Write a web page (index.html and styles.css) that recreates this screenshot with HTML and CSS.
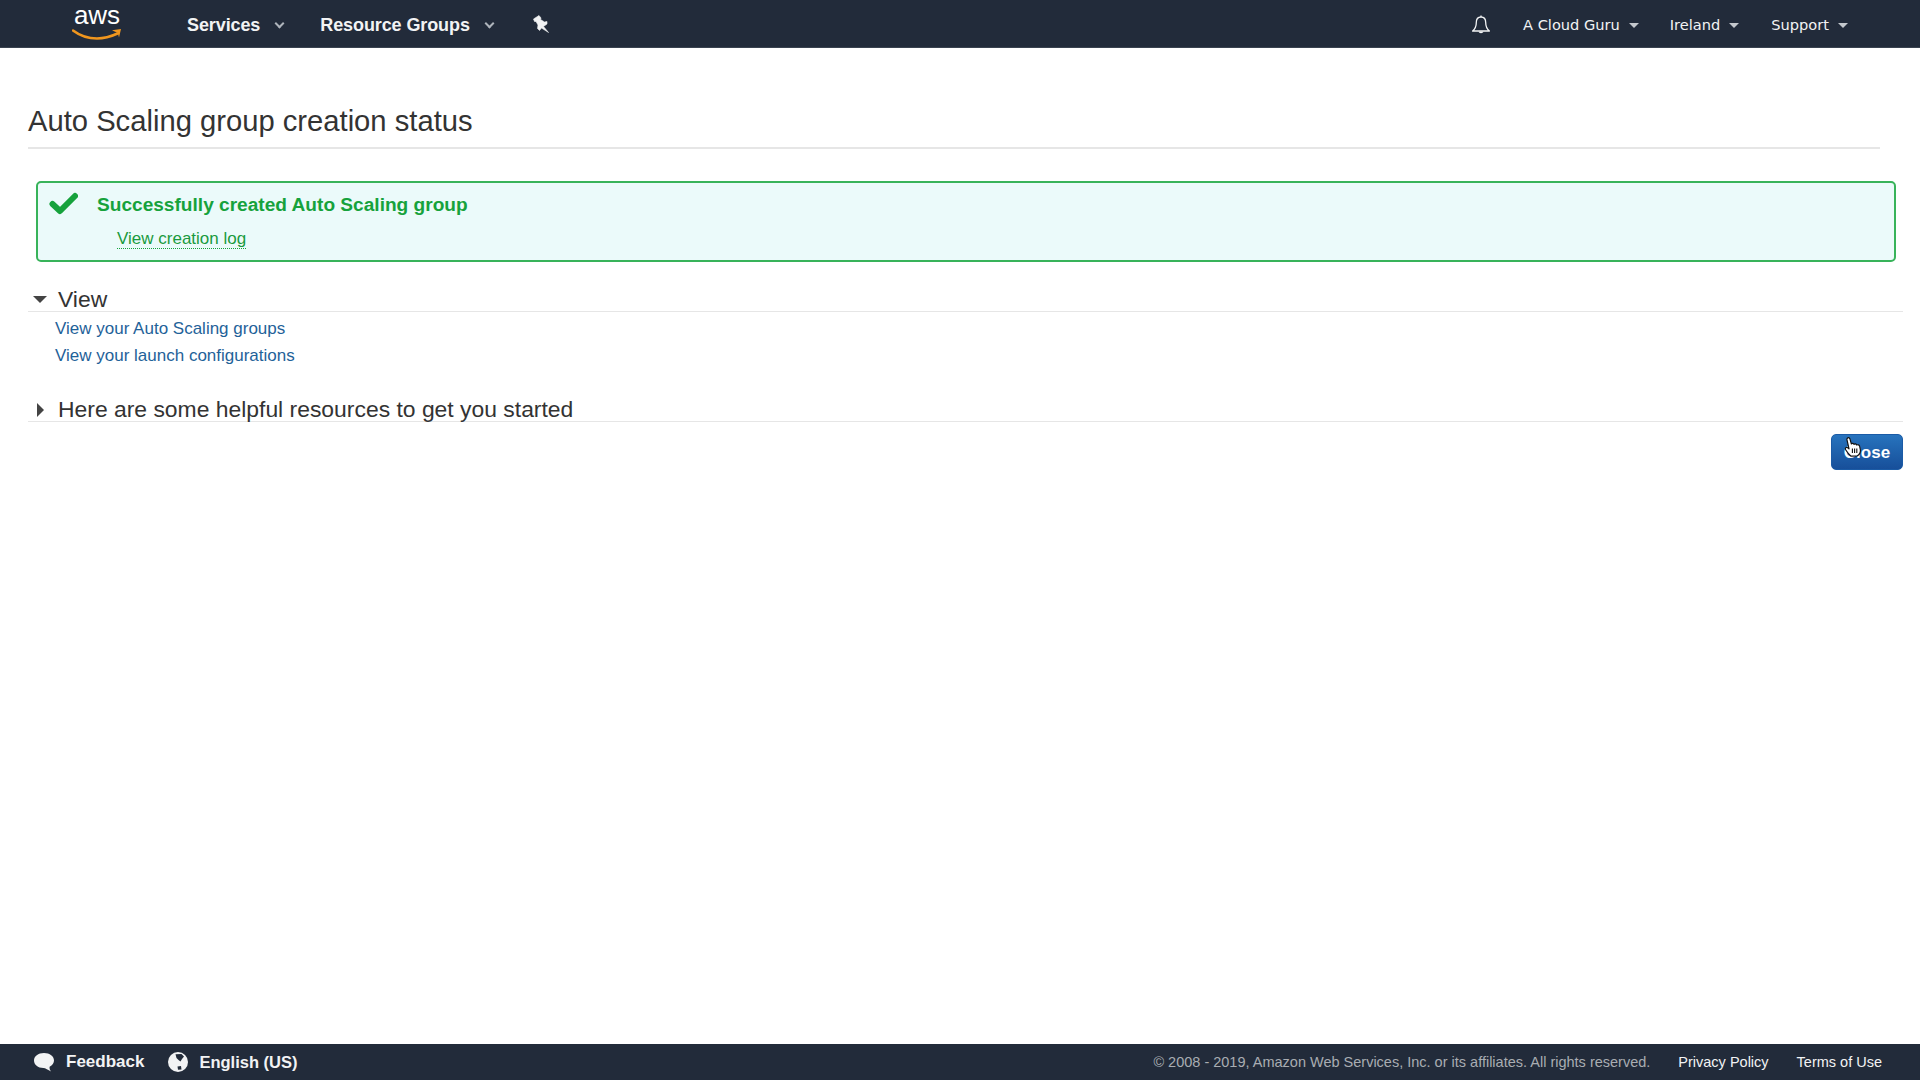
FILE: index.html
```html
<!DOCTYPE html>
<html lang="en">
<head>
    <meta charset="UTF-8">
    <title>Auto Scaling group creation status</title>
    <link rel="stylesheet" href="styles.css">
</head>
<body>

    <nav class="top-nav">
        <a class="logo">
            <span class="logo-text">aws</span>
            <svg class="logo-smile" width="50" height="14" viewBox="0 0 50 14">
                <path d="M1 2.5C9 8.5 17 10.5 25 10.5C32 10.5 39 8.5 45.5 5.5" fill="none" stroke="#f0961e" stroke-width="2.6" stroke-linecap="round"/>
                <path d="M40 2.2L49 1L47 9.5L45.8 5L40 2.2Z" fill="#f0961e"/>
            </svg>
        </a>
        <a class="nav-main services">Services <span class="chevron"></span></a>
        <a class="nav-main groups">Resource Groups <span class="chevron"></span></a>
        <svg class="pin" width="16" height="18" viewBox="0 0 16 18">
            <path d="M0.5 4L6 0.5L8 3L7.6 4.5L11.5 7L14 6.5L14 9L10.5 11.5L15.5 17.5L8.5 13L6.5 15.5L4.5 13.5L5 10L3 6.5L1.5 6.5Z" fill="#f2f3f4" stroke="#f2f3f4" stroke-width="0.6" stroke-linejoin="round"/>
        </svg>

        <div class="nav-right">
            <svg class="bell" width="20" height="20" viewBox="0 0 20 20">
                <path d="M10 2C6.6 2 5.3 4.6 5.3 7.5C5.3 11.5 4.6 13.6 1.6 16H18.4C15.4 13.6 14.7 11.5 14.7 7.5C14.7 4.6 13.4 2 10 2Z" fill="none" stroke="#f2f3f4" stroke-width="1.3" stroke-linejoin="round"/>
                <path d="M10 0.4V2" stroke="#f2f3f4" stroke-width="1.3"/>
                <path d="M7.6 16.6C7.8 18.8 12.2 18.8 12.4 16.6Z" fill="#f2f3f4"/>
            </svg>
            <a class="nav-item account">A Cloud Guru <span class="caret"></span></a>
            <a class="nav-item region">Ireland <span class="caret"></span></a>
            <a class="nav-item support">Support <span class="caret"></span></a>
        </div>
    </nav>

    <main class="content">
        <h1 class="page-title">Auto Scaling group creation status</h1>

        <div class="alert">
            <svg class="alert-check" width="30" height="24" viewBox="0 0 30 24">
                <path d="M4.5 12L12 19L27 4" fill="none" stroke="#16a23c" stroke-width="6" stroke-linecap="round" stroke-linejoin="round"/>
            </svg>
            <div class="alert-body">
                <p class="alert-title">Successfully created Auto Scaling group</p>
                <a class="alert-link">View creation log</a>
            </div>
        </div>

        <section class="panel panel-view">
            <h2 class="panel-head"><span class="arrow-down"></span>View</h2>
            <ul class="panel-links">
                <li><a>View your Auto Scaling groups</a></li>
                <li><a>View your launch configurations</a></li>
            </ul>
        </section>

        <section class="panel panel-help">
            <h2 class="panel-head"><span class="arrow-right"></span>Here are some helpful resources to get you started</h2>
        </section>

        <div class="actions">
            <button class="close-btn" type="button">
                Close
                <svg class="hand-cursor" width="20" height="20" viewBox="0 0 20 20">
                    <path d="M3.5 1C4.6 0.3 5.8 0.9 6 2.1L7.4 7C8.2 6 9.6 6.2 10 7.4C10.8 6.6 12.2 6.8 12.6 8C13.6 7.4 15.4 8 15.6 9.2L16.4 13C16.6 15.6 15 18 13 19L7 19.2C5 17.6 3.4 15.4 1.8 13C0.6 11.4 2 9.6 3.8 10.8L5 11.8L3 2.9C2.9 2.1 3 1.5 3.5 1Z" fill="#fff" stroke="#111" stroke-width="1.2" stroke-linejoin="round"/>
                    <path d="M8.4 11.5V16M10.6 11.5V16M12.8 11.5V16" stroke="#111" stroke-width="1.1"/>
                </svg>
            </button>
        </div>
    </main>

    <footer class="bottom-bar">
        <a class="foot-main feedback">
            <svg width="22" height="21" viewBox="0 0 22 21">
                <path d="M11 1C5.2 1 1 4.2 1 8.6C1 12.8 5 16 10.4 16.1C12.4 16.1 15 18 18 19.6C16.8 18 16.4 16.4 16.6 14.8C19.4 13.4 21 11.2 21 8.6C21 4.2 16.8 1 11 1Z" fill="#f2f3f4"/>
            </svg>
            Feedback
        </a>
        <a class="foot-main language">
            <svg width="20" height="20" viewBox="0 0 20 20">
                <circle cx="10" cy="10" r="10" fill="#f2f3f4"/>
                <path d="M7.5 2.2L13.5 2L16 4.5L14 7L12.5 9.5L10.5 8L8.5 6ZM9.5 14.5L13 14L13.5 17.5L10 17.8Z" fill="#222b3a"/>
            </svg>
            English (US)
        </a>
        <div class="foot-right">
            <span class="copyright">© 2008 - 2019, Amazon Web Services, Inc. or its affiliates. All rights reserved.</span>
            <a class="foot-link privacy">Privacy Policy</a>
            <a class="foot-link">Terms of Use</a>
        </div>
    </footer>

</body>
</html>
```

FILE: styles.css
```css
* {
    box-sizing: border-box;
}

html, body {
    height: 100%;
}

body {
    margin: 0;
    display: flex;
    flex-direction: column;
    height: 100vh;
    overflow: hidden;
    background-color: #fff;
    color: #333;
    font-family: "Liberation Sans", Arial, sans-serif;
}

/* top nav */
.top-nav {
    display: flex;
    align-items: center;
    flex: 0 0 48px;
    height: 48px;
    padding: 2px 0 0 72px;
    background-color: #222b3a;
    color: #f2f3f4;
    border-bottom: 1px solid #3a4350;
}

.logo {
    display: flex;
    flex-direction: column;
    align-self: flex-start;
    width: 50px;
    margin-right: 65px;
    margin-top: -2px;
}

.logo-text {
    height: 30px;
    font-size: 26px;
    line-height: 30px;
    text-align: center;
    color: #fff;
}

.logo-smile {
    margin-top: -2px;
}

.nav-main {
    display: flex;
    align-items: center;
    padding-top: 2px;
    font-size: 18px;
    font-weight: bold;
    letter-spacing: -0.1px;
}

.services {
    margin-right: 37px;
}

.groups {
    margin-right: 40px;
}

.chevron {
    width: 7px;
    height: 7px;
    margin: -5px 0 0 16px;
    border-right: 2px solid #aeb4bb;
    border-bottom: 2px solid #aeb4bb;
    transform: rotate(45deg);
}

.pin {
    margin-top: -2px;
}

.nav-right {
    display: flex;
    align-items: center;
    margin-left: auto;
    padding-right: 72px;
}

.bell {
    margin-right: 32px;
}

.nav-item {
    display: flex;
    align-items: center;
    font-family: "DejaVu Sans", Verdana, sans-serif;
    font-size: 14.6px;
    color: #f2f3f4;
}

.account {
    margin-right: 31px;
}

.region {
    margin-right: 32px;
}

.caret {
    width: 0;
    height: 0;
    margin-left: 9px;
    margin-top: 2px;
    border-left: 5px solid transparent;
    border-right: 5px solid transparent;
    border-top: 5px solid #c4c8cd;
}

/* content */
.content {
    flex: 1;
    padding: 55px 17px 0 28px;
}

.page-title {
    margin: 0 23px 0 0;
    padding-bottom: 8px;
    border-bottom: 2px solid #e6e6e6;
    font-size: 29.2px;
    font-weight: normal;
    line-height: 36px;
    color: #333;
}

.alert {
    display: flex;
    height: 81px;
    margin: 32px 7px 0 8px;
    padding: 8px 10px;
    background-color: #ebfafa;
    border: 2px solid #38b35a;
    border-radius: 5px;
}

.alert-check {
    flex: none;
    margin: 1px 19px 0 0;
}

.alert-body {
    margin-top: 1px;
}

.alert-title {
    margin: 0 0 11px;
    font-size: 19.1px;
    font-weight: bold;
    line-height: 26px;
    color: #16a23c;
}

.alert-link {
    margin-left: 20px;
    border-bottom: 1px dotted #16a23c;
    font-size: 17px;
    color: #1a9a3e;
}

.panel-view {
    margin-top: 26px;
}

.panel-help {
    margin-top: 29px;
}

.panel-head {
    display: flex;
    align-items: center;
    height: 24px;
    margin: 0;
    border-bottom: 1px solid #e6e6e6;
    font-size: 22.9px;
    font-weight: normal;
    line-height: 23px;
    color: #333;
}

.arrow-down {
    width: 0;
    height: 0;
    margin: 0 11px 0 5px;
    border-left: 7px solid transparent;
    border-right: 7px solid transparent;
    border-top: 7px solid #444;
}

.arrow-right {
    width: 0;
    height: 0;
    margin: 0 14px 0 9px;
    border-top: 7px solid transparent;
    border-bottom: 7px solid transparent;
    border-left: 7px solid #444;
}

.panel-links {
    margin: 0;
    padding: 3px 0 0 27px;
    list-style: none;
}

.panel-links li {
    font-size: 17px;
    line-height: 27px;
    color: #1f6299;
}

.actions {
    display: flex;
    justify-content: flex-end;
    margin-top: 12px;
}

.close-btn {
    position: relative;
    width: 72px;
    height: 36px;
    padding: 2px 0 0;
    background: linear-gradient(#2773bd, #174f9a);
    border: 1px solid #1b5ba6;
    border-radius: 5px;
    font-family: "Liberation Sans", Arial, sans-serif;
    font-size: 17px;
    font-weight: bold;
    color: #fff;
}

.hand-cursor {
    position: absolute;
    left: 12px;
    top: 2px;
}

/* footer */
.bottom-bar {
    display: flex;
    align-items: center;
    flex: 0 0 36px;
    height: 36px;
    padding: 0 38px 0 33px;
    background-color: #222b3a;
}

.foot-main {
    display: flex;
    align-items: center;
    gap: 11px;
    font-size: 17px;
    font-weight: bold;
    color: #f2f3f4;
}

.language {
    font-size: 16.5px;
}

.feedback {
    margin-right: 24px;
}

.foot-right {
    display: flex;
    align-items: center;
    margin-left: auto;
    font-size: 14.5px;
}

.copyright {
    margin-right: 28px;
    color: #a9adb2;
}

.foot-link {
    color: #f2f3f4;
}

.privacy {
    margin-right: 28px;
}
```
